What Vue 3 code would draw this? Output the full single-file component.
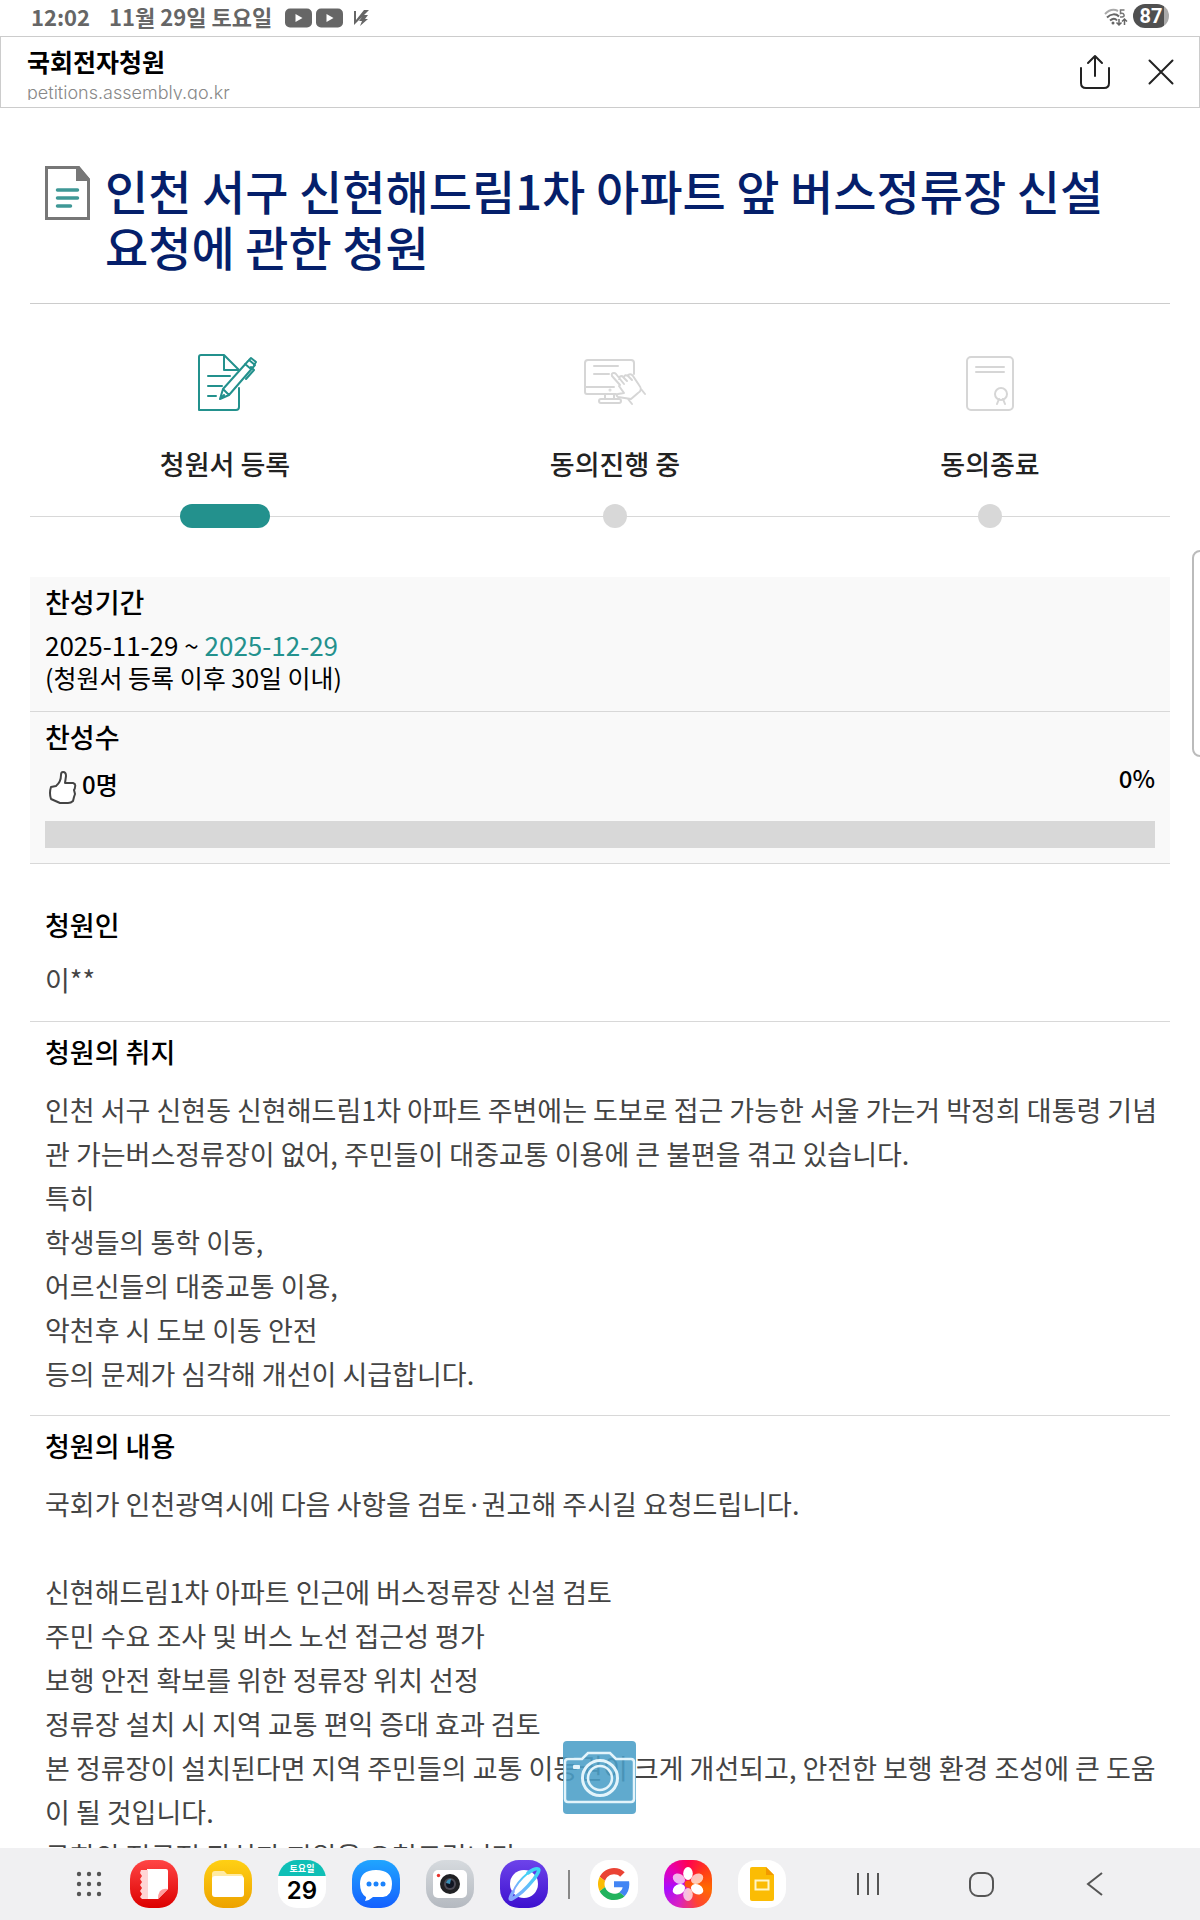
<script setup>
import { ref } from 'vue'

const agreeRate = ref(0)
const agreeCount = ref(0)

const steps = [
  { key: 'register', label: '청원서 등록' },
  { key: 'progress', label: '동의진행 중' },
  { key: 'end', label: '동의종료' }
]
const currentStep = ref('register')

const purpose = [
  '인천 서구 신현동 신현해드림1차 아파트 주변에는 도보로 접근 가능한 서울 가는거 박정희 대통령 기념관 가는버스정류장이 없어, 주민들이 대중교통 이용에 큰 불편을 겪고 있습니다.',
  '특히',
  '학생들의 통학 이동,',
  '어르신들의 대중교통 이용,',
  '악천후 시 도보 이동 안전',
  '등의 문제가 심각해 개선이 시급합니다.'
].join('\n')

const content = [
  '국회가 인천광역시에 다음 사항을 검토·권고해 주시길 요청드립니다.',
  '',
  '신현해드림1차 아파트 인근에 버스정류장 신설 검토',
  '주민 수요 조사 및 버스 노선 접근성 평가',
  '보행 안전 확보를 위한 정류장 위치 선정',
  '정류장 설치 시 지역 교통 편익 증대 효과 검토',
  '본 정류장이 설치된다면 지역 주민들의 교통 이동권이 크게 개선되고, 안전한 보행 환경 조성에 큰 도움이 될 것입니다.',
  '국회의 적극적 관심과 지원을 요청드립니다.'
].join('\n')
</script>

<template>
  <div class="screen">
    <div class="status-bar">
      <span class="time">12:02</span>
      <span class="date">11월 29일 토요일</span>
      <span class="notices">
        <svg v-for="n in 2" :key="n" width="27" height="20" viewBox="0 0 27 20">
          <rect width="27" height="19" y="0.5" rx="5" fill="#666" />
          <path d="M10.5 6v8l7-4z" fill="#fff" />
        </svg>
        <svg class="vs" width="17" height="18" viewBox="0 0 17 18">
          <path d="M1 2h2v9L11 1h5l-5 5h4l-3 4h3l-8 7 2-5H6l3-4-8 8z" fill="#666" />
        </svg>
      </span>
      <span class="signals">
        <svg width="24" height="20" viewBox="0 0 24 20" fill="none">
          <path d="M1 6C5 2 10 1 14 3" stroke="#aaa" stroke-width="2" />
          <path d="M3 9.500c4-4 9-4 12-1M6 12.500c3-2.500 5-2.500 7 0" stroke="#666" stroke-width="2" />
          <circle cx="9" cy="15" r="1.500" fill="#666" />
          <path d="M20.500 2h-4v3.500c4-1 5 3.500 1.500 3.500h-2" stroke="#777" stroke-width="1.500" />
          <path d="M15 11v6m-2.500-2.500L15 17l2.500-2.500M20.500 17v-6M18 13.500l2.500-2.500 2.500 2.500" stroke="#666" stroke-width="1.500" />
        </svg>
        <span class="battery">87</span>
      </span>
    </div>

    <header class="browser-bar">
      <div class="site">
        <strong class="site-name">국회전자청원</strong>
        <span class="site-url">petitions.assembly.go.kr</span>
      </div>
      <button type="button" aria-label="공유">
        <svg width="32" height="36" viewBox="0 0 32 36" fill="none" stroke="#222" stroke-width="2" stroke-linecap="round" stroke-linejoin="round">
          <path d="M2 14v15q0 5 5 5h18q5 0 5-5V14M16 22V2M9 9l7-7 7 7" />
        </svg>
      </button>
      <button type="button" aria-label="닫기">
        <svg width="28" height="28" viewBox="0 0 28 28" stroke="#222" stroke-width="2" stroke-linecap="round">
          <path d="M2.500 2.500l23 23m0-23l-23 23" />
        </svg>
      </button>
    </header>

    <main class="page">
      <div class="title-row">
        <svg class="title-icon" width="45" height="54" viewBox="0 0 45 54">
          <path d="M1.500 1.500h32l10 12v39h-42z" fill="#fff" stroke="#777" stroke-width="3" />
          <path d="M31 0h3l11 13v2H31z" fill="#777" />
          <path d="M12.500 24h20m-20 8h20m-20 8h13" stroke="#3f9896" stroke-width="3.500" stroke-linecap="round" />
        </svg>
        <h1>인천 서구 신현해드림1차 아파트 앞 버스정류장 신설 요청에 관한 청원</h1>
      </div>

      <ol class="steps">
        <li v-for="step in steps" :key="step.key" :class="{ on: step.key === currentStep }">
          <svg v-if="step.key === 'register'" width="64" height="60" viewBox="-2 0 64 60" fill="none" stroke="#23918d" stroke-width="2" stroke-linecap="round" stroke-linejoin="round">
            <path d="M44 17L29 2H6Q4 2 4 4v53h37q3 0 3-3V35M29 2v15h15M13 23h22M13 33h14M13 43h8" />
            <path d="M25 46l3-10L54 7l6 5-26 30zM28 36l6 6M50 11l6 5M51 26l8-9-3-3M54 7l2-2 5 4-2 3M25 46l4-4" />
          </svg>
          <svg v-else-if="step.key === 'progress'" width="64" height="60" viewBox="0 0 64 60" fill="none" stroke="#d6d6d6" stroke-width="2" stroke-linecap="round" stroke-linejoin="round">
            <path d="M33 41H4q-2 0-2-2V10q0-3 3-3h43q3 0 3 3v11M2 34h29M11 13h24M11 21h15M22 42v4m9-4v4" />
            <rect x="16" y="46" width="22" height="4" rx="2" />
            <circle cx="27" cy="37" r="0.500" />
            <path d="M37 32l-8-9q-1-3 2-3 1 0 2 1l8 10M36 26q0-3 3-3l5 5M41 24q1-3 4-1l4 4M45 22q3-2 5 1l6 9q4 5-1 8l-7 6-13-2q-3-2 0-3l6-1-5-7M58 36l4 5M45 46l4 5" />
          </svg>
          <svg v-else width="64" height="60" viewBox="0 0 64 60" fill="none" stroke="#d6d6d6" stroke-width="2" stroke-linecap="round">
            <rect x="9" y="4" width="46" height="53" rx="4" />
            <path d="M18 14h28M18 19h28M41 46l-2 5m6-5l2 5" />
            <circle cx="43" cy="41" r="6" />
          </svg>
          <span class="step-label">{{ step.label }}</span>
          <span class="step-track"><i></i></span>
        </li>
      </ol>

      <section class="summary">
        <div class="summary-item">
          <h2>찬성기간</h2>
          <p class="period">2025-11-29 ~ <em>2025-12-29</em></p>
          <p class="period-note">(청원서 등록 이후 30일 이내)</p>
        </div>
        <div class="summary-item">
          <h2>찬성수</h2>
          <div class="count-row">
            <span class="count">
              <svg width="32" height="34" viewBox="-1 0 32 34" fill="#fff" stroke="#444" stroke-width="2" stroke-linejoin="round">
                <path d="M5 17l5-1q5-4 5-11 0-3 2-3 3 0 3 4l-1 7h8q3 1 2 4 0 2-1 3l1 4-1 3-1 4q-2 2-5 2H14L5 29Q3 23 5 17z" />
              </svg>
              {{ agreeCount }}명
            </span>
            <span class="rate">{{ agreeRate }}%</span>
          </div>
          <div class="bar" role="progressbar" aria-label="찬성률" :aria-valuenow="agreeRate">
            <div class="bar-fill" :style="{ width: agreeRate + '%' }"></div>
          </div>
        </div>
      </section>

      <section class="detail petitioner">
        <h2>청원인</h2>
        <p>이**</p>
      </section>
      <section class="detail">
        <h2>청원의 취지</h2>
        <p>{{ purpose }}</p>
      </section>
      <section class="detail">
        <h2>청원의 내용</h2>
        <p>{{ content }}</p>
      </section>
    </main>

    <div class="edge-handle"></div>

    <button type="button" class="capture" aria-label="화면 캡처">
      <svg width="73" height="73" viewBox="0 0 73 73" fill="none" stroke="#e3f4fb" stroke-width="2.500">
        <path d="M5 18h14l6-6h22l6 6h15q3 0 3 3v37q0 3-3 3H5q-3 0-3-3V21q0-3 3-3z" />
        <circle cx="37" cy="37" r="17.500" stroke-width="3" />
        <circle cx="37" cy="37" r="12" />
        <rect x="10" y="24" width="7" height="4" rx="1" fill="#e3f4fb" stroke="none" />
      </svg>
    </button>

    <nav class="dock">
      <div class="dock-apps">
        <button type="button" class="all-apps" aria-label="모든 앱">
          <svg width="30" height="30" viewBox="0 0 30 30" fill="#555">
            <template v-for="row in 3" :key="row">
              <circle v-for="col in 3" :key="col" :cx="col * 10 - 5" :cy="row * 10 - 5" r="2.200" />
            </template>
          </svg>
        </button>
        <button type="button" class="app notes" aria-label="노트">
          <svg width="48" height="48" viewBox="0 0 48 48">
            <path d="M17 9h19q2 0 2 2v18L28 39H17z" fill="#fff" />
            <path d="M11 10h7v29h-6l-2-2 2-3-2-3 2-3-2-3 2-3-2-3 2-3-2-3z" fill="#ffd5d5" />
            <path d="M38 29q-10-2-10 10z" fill="#ff9c9c" />
          </svg>
        </button>
        <button type="button" class="app files" aria-label="내 파일">
          <svg width="48" height="48" viewBox="0 0 48 48">
            <path d="M8 14q0-3 3-3h9l3 3h13q3 0 3 3v5H8z" fill="#ffeaa3" />
            <rect x="8" y="16" width="32" height="21" rx="3" fill="#fff" />
          </svg>
        </button>
        <button type="button" class="app calendar" aria-label="캘린더">
          <span class="weekday">토요일</span>
          <span class="day">29</span>
        </button>
        <button type="button" class="app messages" aria-label="메시지">
          <svg width="48" height="48" viewBox="0 0 48 48">
            <path d="M14 38l-1 3q5-1 8-4h10q9-1 9-13 0-14-16-14T8 24q0 9 6 13z" fill="#fff" />
            <g fill="#1c83fb"><circle cx="17" cy="24" r="2.500" /><circle cx="24" cy="24" r="2.500" /><circle cx="31" cy="24" r="2.500" /></g>
          </svg>
        </button>
        <button type="button" class="app camera" aria-label="카메라">
          <svg width="48" height="48" viewBox="0 0 48 48">
            <rect x="7" y="10" width="34" height="28" rx="5" fill="#fff" />
            <circle cx="12.500" cy="15.500" r="1.700" fill="#e8322c" />
            <circle cx="24" cy="24" r="10" fill="#202124" />
            <circle cx="24" cy="24" r="6" fill="#4c4a55" />
            <circle cx="24" cy="24" r="4" fill="#111522" />
            <path d="M20 23q1-4 5-4l-1 5z" fill="#3b91b8" />
          </svg>
        </button>
        <button type="button" class="app internet" aria-label="인터넷">
          <svg width="48" height="48" viewBox="0 0 48 48">
            <defs>
              <linearGradient id="orbit" x1="0" y1="1" x2="1" y2="0">
                <stop offset="0" stop-color="#8ba2ff" /><stop offset="1" stop-color="#39d8f4" />
              </linearGradient>
            </defs>
            <circle cx="24" cy="24" r="14" fill="#fff" />
            <path d="M13 32Q8 41 12 39 22 34 34 19 41 9 38 9 35 8 28 13" fill="none" stroke="url(#orbit)" stroke-width="3.500" stroke-linecap="round" />
            <path d="M13 32Q17 22 28 13" fill="none" stroke="url(#orbit)" stroke-width="2" />
          </svg>
        </button>
      </div>
      <span class="dock-divider"></span>
      <div class="dock-apps">
        <button type="button" class="app" aria-label="Google">
          <svg width="32" height="32" viewBox="0 0 48 48">
            <path fill="#ea4335" d="M24 9.500c3.540 0 6.710 1.220 9.210 3.600l6.850-6.850C35.900 2.380 30.470 0 24 0 14.620 0 6.510 5.380 2.560 13.220l7.980 6.190C12.430 13.720 17.740 9.500 24 9.500z" />
            <path fill="#4285f4" d="M46.980 24.550c0-1.570-.15-3.090-.38-4.550H24v9.020h12.940c-.58 2.960-2.260 5.480-4.780 7.180l7.730 6c4.510-4.180 7.090-10.360 7.090-17.650z" />
            <path fill="#fbbc05" d="M10.530 28.590c-.48-1.450-.76-2.990-.76-4.590s.27-3.140.76-4.590l-7.980-6.190C.92 16.460 0 20.120 0 24c0 3.880.92 7.540 2.560 10.780l7.970-6.190z" />
            <path fill="#22b35e" d="M24 48c6.480 0 11.930-2.130 15.890-5.810l-7.730-6c-2.150 1.450-4.920 2.300-8.160 2.300-6.260 0-11.570-4.220-13.470-9.910l-7.980 6.190C6.510 42.620 14.620 48 24 48z" />
          </svg>
        </button>
        <button type="button" class="app gallery" aria-label="갤러리">
          <svg width="48" height="48" viewBox="0 0 48 48">
            <ellipse v-for="n in 6" :key="n" cx="24" cy="13.500" rx="4.800" ry="6.500" :transform="`rotate(${n * 60} 24 24)`" fill="#fff" :opacity="[1, 5, 3].includes(n) ? 0.7 : 1" />
            <circle cx="24" cy="24" r="3.500" fill="#ff520d" />
          </svg>
        </button>
        <button type="button" class="app" aria-label="Slides">
          <svg width="48" height="48" viewBox="0 0 48 48">
            <path d="M14 7h14l8 8v24q0 2-2 2H14q-2 0-2-2V9q0-2 2-2z" fill="#fbbc04" />
            <path d="M28 7l8 8h-8z" fill="#f29900" />
            <rect x="17.500" y="20.500" width="13" height="9" fill="none" stroke="#fff6c8" stroke-width="2" />
          </svg>
        </button>
      </div>
      <div class="dock-nav">
        <button type="button" aria-label="최근 앱">
          <svg width="48" height="48" viewBox="0 0 48 48" stroke="#555" stroke-width="2"><path d="M14 13v22M24 13v22M34 13v22" /></svg>
        </button>
        <button type="button" aria-label="홈">
          <svg width="48" height="48" viewBox="0 0 48 48" fill="none" stroke="#555" stroke-width="2"><rect x="13" y="13" width="23" height="23" rx="8" /></svg>
        </button>
        <button type="button" aria-label="뒤로">
          <svg width="48" height="48" viewBox="0 0 48 48" fill="none" stroke="#555" stroke-width="2"><path d="M32 13L18 24l14 11" /></svg>
        </button>
      </div>
    </nav>
  </div>
</template>

<style>
body {
  margin: 0;
  background: #fff;
}
</style>

<style scoped>
.screen {
  position: relative;
  display: flex;
  flex-direction: column;
  height: 100vh;
  overflow: hidden;
  font-family: "Noto Sans CJK KR", sans-serif;
  color: #000;
}

h1, h2, p, ol {
  margin: 0;
  padding: 0;
}

button {
  padding: 0;
  border: 0;
  background: none;
  font: inherit;
  color: inherit;
  cursor: pointer;
}

svg {
  display: block;
}

.status-bar {
  display: flex;
  align-items: center;
  flex: none;
  height: 36px;
  padding: 0 31px;
  font-size: 22px;
  font-weight: 700;
  line-height: 32px;
  color: #666;
}

.time,
.date {
  height: 36px;
}

.date {
  margin-left: 19px;
}

.notices {
  display: flex;
  align-items: center;
  gap: 4px;
  margin-left: 13px;
}

.vs {
  margin-left: 6px;
}

.signals {
  display: flex;
  align-items: center;
  gap: 5px;
  margin-left: auto;
}

.battery {
  width: 36px;
  height: 24px;
  margin-bottom: 4px;
  border-radius: 12px;
  background: linear-gradient(90deg, #505050 86%, #aaa 86%);
  color: #fff;
  font-family: Roboto, sans-serif;
  font-size: 20px;
  line-height: 24px;
  text-align: center;
}

.browser-bar {
  display: flex;
  align-items: center;
  flex: none;
  gap: 36px;
  padding: 6px 24px 7px 26px;
  border: 1px solid #ccc;
}

.site {
  display: flex;
  flex-direction: column;
  gap: 2px;
  margin-right: auto;
}

.site-name {
  font-size: 25px;
  font-weight: 700;
  line-height: 36px;
}

.site-url {
  height: 19px;
  overflow: hidden;
  font-family: Inter, sans-serif;
  font-size: 18px;
  font-weight: 300;
  line-height: 24px;
  color: #888;
}

.page {
  flex: 1;
  min-height: 0;
  padding: 54px 30px 0;
  overflow-y: auto;
  scrollbar-width: none;
}

.title-row {
  display: flex;
  gap: 15px;
  padding: 0 15px 29px;
  border-bottom: 1px solid #ccc;
}

.title-icon {
  flex: none;
  margin-top: 4px;
}

h1 {
  font-size: 47px;
  font-weight: 500;
  line-height: 56px;
  color: #051f6b;
  word-break: keep-all;
}

h2 {
  font-size: 27px;
  font-weight: 500;
  line-height: 36px;
}

.steps {
  display: grid;
  grid-template-columns: 13fr 13fr 12fr;
  padding-top: 49px;
  list-style: none;
}

.steps li {
  display: flex;
  flex-direction: column;
  align-items: center;
}

.step-label {
  margin-top: 33px;
  font-size: 27px;
  font-weight: 500;
  line-height: 36px;
  color: #222;
}

.step-track {
  display: flex;
  justify-content: center;
  width: 100%;
  margin-top: 22px;
  background: linear-gradient(#d8d8d8, #d8d8d8) center / 100% 1px no-repeat;
}

.step-track i {
  width: 24px;
  height: 24px;
  border-radius: 12px;
  background: #d8d8d8;
}

.on .step-track i {
  width: 90px;
  background: #23918d;
}

.summary {
  margin-top: 49px;
  background: #f9f9f9;
}

.summary-item {
  padding: 7px 15px 15px;
  border-bottom: 1px solid #d8d8d8;
}

.period {
  margin-top: 8px;
  font-size: 26px;
  line-height: 33px;
}

.period em {
  font-style: normal;
  color: #23918d;
}

.period-note {
  margin-bottom: 17px;
  font-size: 25px;
  line-height: 33px;
}

.summary-item:first-child {
  padding-bottom: 0;
}

.count-row {
  display: flex;
  justify-content: space-between;
  align-items: flex-start;
  margin-top: 5px;
  font-size: 24px;
  font-weight: 500;
}

.count {
  display: flex;
  align-items: center;
  gap: 5px;
  height: 48px;
  line-height: 48px;
}

.count svg {
  margin-top: 6px;
}

.rate {
  line-height: 36px;
}

.bar {
  height: 27px;
  margin-top: 13px;
  background: #d8d8d8;
}

.bar-fill {
  height: 100%;
  background: #23918d;
}

.detail {
  padding: 12px 0 19px 15px;
  border-bottom: 1px solid #d8d8d8;
}

.detail p {
  margin-top: 18px;
  font-size: 27px;
  line-height: 44px;
  color: #444;
  white-space: pre-wrap;
}

.petitioner {
  margin-top: 31px;
}

.petitioner p {
  margin-top: 15px;
}

.edge-handle {
  position: absolute;
  top: 550px;
  right: -12px;
  width: 16px;
  height: 203px;
  border: 2px solid #bbb;
  border-radius: 8px;
  background: #fff;
}

.capture {
  position: absolute;
  bottom: 106px;
  left: calc(50% - 37px);
  border-radius: 4px;
  background: rgba(74, 158, 199, 0.88);
}

.dock {
  display: flex;
  align-items: center;
  flex: none;
  gap: 20px;
  height: 72px;
  padding: 0 82px 0 74px;
  background: #f0f0f2;
}

.dock-apps {
  display: flex;
  align-items: center;
  gap: 26px;
}

.app {
  display: flex;
  flex-direction: column;
  align-items: center;
  justify-content: center;
  width: 48px;
  height: 48px;
  border-radius: 19px;
  overflow: hidden;
  background: #fff;
}

.notes {
  background: linear-gradient(#ff4545, #dc0000);
}

.files {
  background: linear-gradient(#ffd014, #eda200);
}

.messages {
  background: linear-gradient(#20a5ff, #1460ff);
}

.camera {
  background: linear-gradient(#d6dade, #b4b9c0);
}

.internet {
  background: linear-gradient(#6d43ea, #3d10cf);
}

.gallery {
  background: conic-gradient(#ff0051, #ff3b18, #ff6a00, #ff4433, #d921c2, #a80cff, #e400b8, #ff0051);
}

.weekday {
  width: 100%;
  height: 16px;
  background: #0fbfb6;
  color: #fff;
  font-size: 9px;
  font-weight: 700;
  line-height: 17px;
}

.day {
  height: 32px;
  font-family: Inter, sans-serif;
  font-size: 24px;
  font-weight: 600;
  line-height: 30px;
}

.dock-divider {
  width: 2px;
  height: 29px;
  background: #888;
}

.dock-nav {
  display: flex;
  gap: 65px;
  margin-left: auto;
}
</style>
